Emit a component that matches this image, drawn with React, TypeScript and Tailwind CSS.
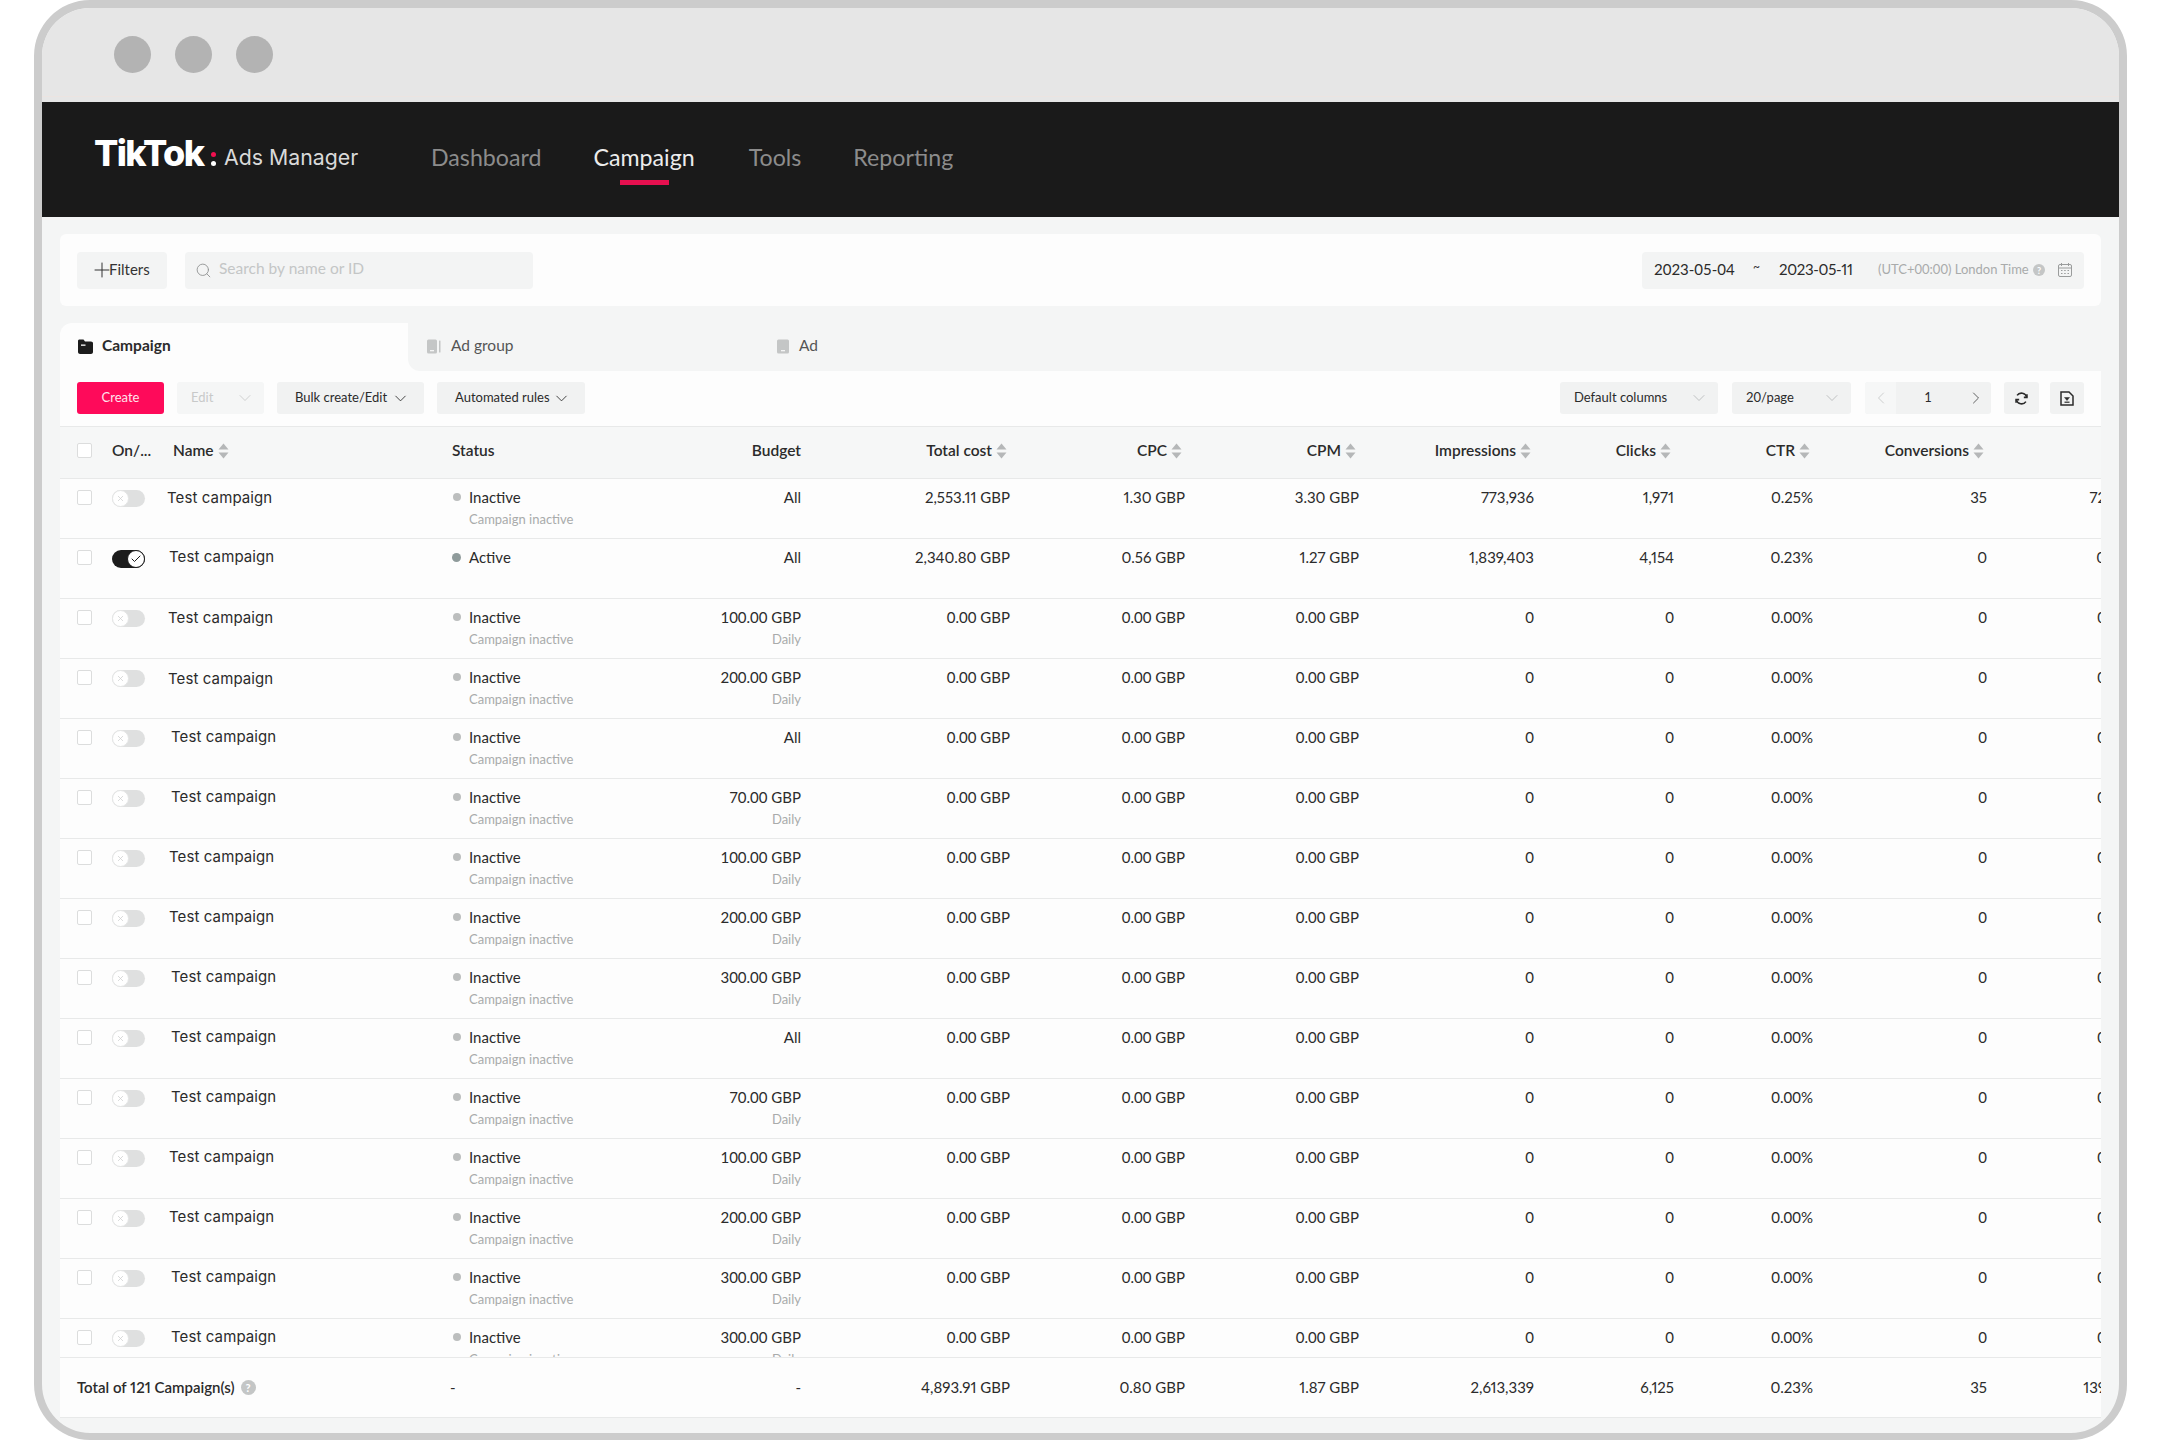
import { ChevronDown, ChevronLeft, ChevronRight, Check, Plus, Search, X } from 'lucide-react';

const sans = "font-['Lato','Liberation_Sans',sans-serif]";
const wide = "font-['Inter','Liberation_Sans',sans-serif]";

type Row = {
  budget: string;
  cost: string;
  cpc: string;
  cpm: string;
  impressions: string;
  clicks: string;
  ctr: string;
  conversions: string;
  next: string;
  nameClass: string;
  active?: boolean;
  spend?: boolean;
  clipped?: boolean;
};

const zeroRow = {
  cost: '0.00 GBP',
  cpc: '0.00 GBP',
  cpm: '0.00 GBP',
  impressions: '0',
  clicks: '0',
  ctr: '0.00%',
  conversions: '0',
  next: '0',
};

const rows: Row[] = [
  { budget: 'All', cost: '2,553.11 GBP', cpc: '1.30 GBP', cpm: '3.30 GBP', impressions: '773,936', clicks: '1,971', ctr: '0.25%', conversions: '35', next: '72', nameClass: 'pl-0 pt-[1px]', spend: true },
  { budget: 'All', cost: '2,340.80 GBP', cpc: '0.56 GBP', cpm: '1.27 GBP', impressions: '1,839,403', clicks: '4,154', ctr: '0.23%', conversions: '0', next: '0', nameClass: 'pl-[2px]', active: true, spend: true },
  { ...zeroRow, budget: '100.00 GBP', nameClass: 'pl-[1px] pt-[1px]' },
  { ...zeroRow, budget: '200.00 GBP', nameClass: 'pl-[1px] pt-[2px]' },
  { ...zeroRow, budget: 'All', nameClass: 'pl-[4px]' },
  { ...zeroRow, budget: '70.00 GBP', nameClass: 'pl-[4px]' },
  { ...zeroRow, budget: '100.00 GBP', nameClass: 'pl-[2px]' },
  { ...zeroRow, budget: '200.00 GBP', nameClass: 'pl-[2px]' },
  { ...zeroRow, budget: '300.00 GBP', nameClass: 'pl-[4px]' },
  { ...zeroRow, budget: 'All', nameClass: 'pl-[4px]' },
  { ...zeroRow, budget: '70.00 GBP', nameClass: 'pl-[4px]' },
  { ...zeroRow, budget: '100.00 GBP', nameClass: 'pl-[2px]' },
  { ...zeroRow, budget: '200.00 GBP', nameClass: 'pl-[2px]' },
  { ...zeroRow, budget: '300.00 GBP', nameClass: 'pl-[4px]' },
  { ...zeroRow, budget: '300.00 GBP', nameClass: 'pl-[4px]', clipped: true },
];

const cols = {
  check: 'w-[52px] shrink-0 pl-[17px]',
  toggle: 'w-[55px] shrink-0',
  name: 'w-[285px] shrink-0',
  status: 'w-[168px] shrink-0',
  budget: 'w-[181px] shrink-0 text-right',
  cost: 'w-[209px] shrink-0 text-right',
  cpc: 'w-[175px] shrink-0 text-right',
  cpm: 'w-[174px] shrink-0 text-right',
  impressions: 'w-[175px] shrink-0 text-right',
  clicks: 'w-[140px] shrink-0 text-right',
  ctr: 'w-[139px] shrink-0 text-right',
  conversions: 'w-[174px] shrink-0 text-right',
  next: 'w-[119px] shrink-0 text-right',
};

function SortIcon() {
  return (
    <svg viewBox="0 0 11 16" className="w-[11px] h-[16px] ml-[4px] shrink-0" fill="#b5b7b8">
      <path d="M5.5 0.5 L10.5 6.5 H0.5 Z" />
      <path d="M0.5 9.5 H10.5 L5.5 15.5 Z" />
    </svg>
  );
}

function HelpDot({ className }: { className: string }) {
  return (
    <span className={`${className} shrink-0 inline-flex items-center justify-center rounded-full bg-[#c4c6c6] text-white font-bold leading-none`}>?</span>
  );
}

function Checkbox() {
  return <div className="w-[15px] h-[15px] rounded-[2px] border border-[#dcdddd] bg-white" />;
}

function Toggle({ on }: { on?: boolean }) {
  if (on) {
    return (
      <div className="relative w-[33px] h-[18px] rounded-full bg-[#1c1c1c]">
        <div className="absolute right-0 top-0 w-[18px] h-[18px] rounded-full bg-white border border-[#1c1c1c] flex items-center justify-center">
          <Check className="w-[12px] h-[12px] text-[#1c1c1c]" strokeWidth={2} />
        </div>
      </div>
    );
  }
  return (
    <div className="relative w-[33px] h-[17px] rounded-full bg-[#dfe0e0]">
      <div className="absolute left-0 top-0 w-[17px] h-[17px] rounded-full bg-white border border-[#e4e5e5] flex items-center justify-center">
        <X className="w-[9px] h-[9px] text-[#cfd0d0]" strokeWidth={2} />
      </div>
    </div>
  );
}

function HeaderCell({ label, col }: { label: string; col: string }) {
  return (
    <div className={`${col} flex justify-end items-center pr-[3px]`}>
      <span>{label}</span>
      <SortIcon />
    </div>
  );
}

function TableRow({ row }: { row: Row }) {
  return (
    <div className={`flex items-start border-b border-[#e8e9e9] text-[15px] leading-[20px] text-[#2b2b2b] ${row.spend ? 'proportional-nums' : ''} ${row.clipped ? 'h-[39px] overflow-hidden' : 'h-[60px]'}`}>
      <div className={`${cols.check} pt-[11px]`}>
        <Checkbox />
      </div>
      <div className={`${cols.toggle} pt-[11px]`}>
        <Toggle on={row.active} />
      </div>
      <div className={`${cols.name} ${wide} text-[15px] tracking-[0.1px] pt-[8px]`}>
        <div className={row.nameClass}>Test campaign</div>
      </div>
      <div className={`${cols.status} pt-[8px]`}>
        <div className="flex items-center">
          <span className={`rounded-full mr-[8px] ${row.active ? 'w-[9px] h-[9px] bg-[#8f9b9b]' : 'w-[8px] h-[8px] bg-[#bcbebe] ml-[1px]'}`} />
          <span>{row.active ? 'Active' : 'Inactive'}</span>
        </div>
        {!row.active && <div className="pl-[17px] mt-[2px] text-[13px] text-[#a9abab]">Campaign inactive</div>}
      </div>
      <div className={`${cols.budget} pt-[8px]`}>
        <div>{row.budget}</div>
        {row.budget !== 'All' && <div className="mt-[2px] text-[13px] text-[#a9abab]">Daily</div>}
      </div>
      <div className={`${cols.cost} pt-[8px]`}>{row.cost}</div>
      <div className={`${cols.cpc} pt-[8px]`}>{row.cpc}</div>
      <div className={`${cols.cpm} pt-[8px]`}>{row.cpm}</div>
      <div className={`${cols.impressions} pt-[8px]`}>{row.impressions}</div>
      <div className={`${cols.clicks} pt-[8px]`}>{row.clicks}</div>
      <div className={`${cols.ctr} pt-[8px]`}>{row.ctr}</div>
      <div className={`${cols.conversions} pt-[8px]`}>{row.conversions}</div>
      <div className={`${cols.next} pt-[8px]`}>{row.next}</div>
    </div>
  );
}

export default function App() {
  return (
    <div className={`${sans} w-[2160px] h-[1440px] bg-white pl-[34px] pr-[33px] overflow-hidden`}>
      <div className="h-full flex flex-col overflow-hidden rounded-[56px] border-x-[8px] border-t-[8px] border-b-[7px] border-[#cccccc] bg-[#f4f5f5]">
        {/* window chrome */}
        <div className="h-[94px] shrink-0 bg-[#e6e6e6]">
          <div className="h-[89px] flex items-center gap-[24px] pl-[72px] pt-[5px] border-b border-[#ece4e1]">
            <div className="w-[37px] h-[37px] rounded-full bg-[#b3b3b3]" />
            <div className="w-[37px] h-[37px] rounded-full bg-[#b3b3b3]" />
            <div className="w-[37px] h-[37px] rounded-full bg-[#b3b3b3]" />
          </div>
        </div>

        {/* top nav */}
        <div className="h-[115px] shrink-0 flex items-center pl-[52px] pb-[4px] bg-[#1a1a1a] text-[23.2px] leading-none">
          <span className={`${wide} w-[113px] -mt-[9px] text-[36px] font-extrabold tracking-[-1.6px] text-white`}>TikTok</span>
          <span className="flex flex-col gap-[4px] ml-[4px] mt-[2px]">
            <span className="w-[5px] h-[5px] rounded-full bg-[#f0104f]" />
            <span className="w-[5px] h-[5px] rounded-full bg-white" />
          </span>
          <span className={`${wide} ml-[8px] w-[207px] text-[21.3px] text-[#d9d9d9]`}>Ads Manager</span>
          <nav className="flex gap-[52px] text-[#8c8c8c]">
            <span>Dashboard</span>
            <span className="relative text-[#ececec]">
              Campaign
              <span className="absolute left-[27px] top-[34px] w-[49px] h-[5px] bg-[#e6104f]" />
            </span>
            <span className="ml-[2px]">Tools</span>
            <span>Reporting</span>
          </nav>
        </div>

        <div className="flex-1 min-h-0 flex flex-col px-[18px] pt-[17px] pb-[15px]">
          {/* filters */}
          <div className="h-[72px] shrink-0 flex items-center justify-between px-[17px] rounded-[6px] bg-[#fdfdfd]">
            <div className="flex items-center gap-[18px]">
              <div className="w-[90px] h-[37px] rounded-[4px] bg-[#f3f4f4] flex items-center pl-[13px] pb-[2px] text-[15px] text-[#333]">
                <Plus className="w-[24px] h-[24px] -mr-[5px] mt-[2px]" strokeWidth={1} />
                Filters
              </div>
              <div className="w-[348px] h-[37px] rounded-[4px] bg-[#f3f4f4] flex items-center pl-[10px] pb-[2px] text-[15.5px] text-[#c4c6c6]">
                <Search className="w-[17px] h-[17px] text-[#8f9191] mr-[7px] mt-[2px]" strokeWidth={1.25} />
                Search by name or ID
              </div>
            </div>
            <div className="w-[442px] h-[37px] rounded-[4px] bg-[#f3f4f4] flex items-center pl-[12px] pb-[2px] text-[15px] text-[#2b2b2b] whitespace-nowrap">
              <span className="w-[81px] shrink-0">2023-05-04</span>
              <span className="w-[44px] shrink-0 pl-[18px] -mt-[4px] text-[12px]">~</span>
              <span className="w-[99px] shrink-0 proportional-nums tracking-[-0.3px]">2023-05-11</span>
              <span className="w-[155px] shrink-0 mt-[2px] text-[13px] text-[#a9abab]">(UTC+00:00) London Time</span>
              <HelpDot className="w-[12px] h-[12px] mt-[2px] text-[9px]" />
              <svg viewBox="0 0 16 16" className="ml-[12px] mt-[2px] w-[16px] h-[16px] shrink-0" fill="none" stroke="#9a9c9c" strokeWidth="1">
                <rect x="1.500" y="2.500" width="13" height="12" rx="1.500" />
                <path d="M1.500 6H14.500M4.500 1V4M11.500 1V4" />
                <path d="M4 8.500H5.500M7.200 8.500H8.700M10.500 8.500H12M4 11.500H5.500M7.200 11.500H8.700M10.500 11.500H12" />
              </svg>
            </div>
          </div>

          {/* level tabs */}
          <div className="mt-[17px] h-[48px] shrink-0 flex rounded-t-[12px] bg-[#fdfdfd] text-[15.5px]">
            <div className="w-[348px] flex items-center pl-[18px] pb-[2px] font-bold text-[#2b2b2b]">
              <svg viewBox="0 0 15 15" className="w-[15px] h-[15px] mr-[9px]" fill="#1c1c1c">
                <path d="M0 2C0 1 .7 .5 1.500 .5H5.500L7 2.500H13C14 2.500 15 3.200 15 4.300V13C15 14 14 15 13 15H2C1 15 0 14 0 13Z" />
                <rect x="3" y="5.500" width="4.500" height="1.300" fill="#fdfdfd" />
              </svg>
              Campaign
            </div>
            <div className="flex-1 flex items-center pl-[19px] pb-[2px] rounded-bl-[12px] bg-[#f4f5f5] text-[#555]">
              <svg viewBox="0 0 14 15" className="w-[14px] h-[15px] mr-[10px]" fill="#c4c6c6">
                <rect x="0" y="0.500" width="10" height="14" rx="1.500" />
                <rect x="12" y="1.500" width="1.500" height="12" rx="0.500" />
                <rect x="3" y="11" width="4" height="1.300" fill="#f4f5f5" />
              </svg>
              <span className="w-[326px]">Ad group</span>
              <svg viewBox="0 0 12 15" className="w-[12px] h-[15px] mr-[10px]" fill="#c4c6c6">
                <rect x="0" y="0.500" width="12" height="14" rx="1.500" />
                <rect x="4" y="11" width="4" height="1.300" fill="#f4f5f5" />
              </svg>
              <span>Ad</span>
            </div>
          </div>

          {/* table card */}
          <div className="flex-1 min-h-0 flex flex-col overflow-hidden bg-[#fdfdfd] text-[#2b2b2b]">
            <div className="h-[55px] shrink-0 flex items-center justify-between px-[17px] pb-[1px] text-[13px]">
              <div className="flex items-center">
                <div className="w-[87px] h-[32px] rounded-[3px] bg-[#fe0a5a] flex items-center justify-center text-[#ffe4ec]">Create</div>
                <div className="ml-[13px] w-[87px] h-[32px] rounded-[3px] bg-[#f5f6f6] flex items-center justify-between pl-[14px] pr-[9px] text-[#c8c9c9]">
                  Edit
                  <ChevronDown className="w-[20px] h-[20px]" strokeWidth={1} />
                </div>
                <div className="ml-[13px] w-[147px] h-[32px] rounded-[3px] bg-[#f1f2f2] flex items-center justify-between pl-[18px] pr-[14px]">
                  Bulk create/Edit
                  <ChevronDown className="w-[19px] h-[19px]" strokeWidth={1.1} />
                </div>
                <div className="ml-[13px] w-[148px] h-[32px] rounded-[3px] bg-[#f1f2f2] flex items-center justify-between pl-[18px] pr-[14px]">
                  Automated rules
                  <ChevronDown className="w-[19px] h-[19px]" strokeWidth={1.1} />
                </div>
              </div>
              <div className="flex items-center">
                <div className="w-[158px] h-[32px] rounded-[3px] bg-[#f1f2f2] flex items-center justify-between pl-[14px] pr-[9px]">
                  Default columns
                  <ChevronDown className="w-[20px] h-[20px] text-[#b5b7b8]" strokeWidth={1} />
                </div>
                <div className="ml-[14px] w-[119px] h-[32px] rounded-[3px] bg-[#f1f2f2] flex items-center justify-between pl-[14px] pr-[9px]">
                  20/page
                  <ChevronDown className="w-[20px] h-[20px] text-[#b5b7b8]" strokeWidth={1} />
                </div>
                <div className="ml-[14px] w-[126px] h-[32px] flex items-stretch rounded-[3px] overflow-hidden bg-[#f1f2f2]">
                  <div className="w-[31px] bg-[#f6f7f7] flex items-center justify-center">
                    <ChevronLeft className="w-[20px] h-[20px] text-[#c4c6c6]" strokeWidth={1} />
                  </div>
                  <div className="flex-1 flex items-center justify-center">1</div>
                  <div className="w-[31px] flex items-center justify-center">
                    <ChevronRight className="w-[20px] h-[20px] text-[#444]" strokeWidth={1} />
                  </div>
                </div>
                <div className="ml-[13px] w-[35px] h-[32px] rounded-[3px] bg-[#f1f2f2] flex items-center justify-center">
                  <svg viewBox="0 0 16 16" className="w-[15px] h-[15px]" fill="none" stroke="#2b2b2b" strokeWidth="1.700">
                    <path d="M13.500 6.500A5.700 5.700 0 0 0 3.300 4.700" />
                    <path d="M2.500 9.500A5.700 5.700 0 0 0 12.700 11.300" />
                    <path d="M13.800 3.500V6.800H10.500" />
                    <path d="M2.200 12.500V9.200H5.500" />
                  </svg>
                </div>
                <div className="ml-[11px] w-[34px] h-[32px] rounded-[3px] bg-[#f1f2f2] flex items-center justify-center">
                  <svg viewBox="0 0 14 15" className="w-[14px] h-[15px]" fill="none" stroke="#2b2b2b" strokeWidth="1.500">
                    <path d="M1 1H9L13 5V14H1Z" />
                    <path d="M4.500 6.500H9.500L7 9.500Z" fill="#2b2b2b" strokeWidth="0.500" />
                    <path d="M4.500 11.200H9.500" strokeWidth="1.200" />
                  </svg>
                </div>
              </div>
            </div>

            {/* column heads */}
            <div className="h-[53px] shrink-0 flex items-center pb-[4px] border-y border-[#e8e9e9] bg-[#f6f7f7] text-[15.5px] font-semibold text-[#2b2b2b]">
              <div className={cols.check}>
                <Checkbox />
              </div>
              <div className={cols.toggle}>On/...</div>
              <div className={`${cols.name} flex items-center pl-[6px]`}>
                Name
                <SortIcon />
              </div>
              <div className={cols.status}>Status</div>
              <div className={cols.budget}>Budget</div>
              <HeaderCell label="Total cost" col={cols.cost} />
              <HeaderCell label="CPC" col={cols.cpc} />
              <HeaderCell label="CPM" col={cols.cpm} />
              <HeaderCell label="Impressions" col={cols.impressions} />
              <HeaderCell label="Clicks" col={cols.clicks} />
              <HeaderCell label="CTR" col={cols.ctr} />
              <HeaderCell label="Conversions" col={cols.conversions} />
              <div className={cols.next} />
            </div>

            {rows.map((row, i) => (
              <TableRow key={i} row={row} />
            ))}

            {/* totals */}
            <div className="h-[60px] shrink-0 flex items-center border-b border-[#e8e9e9] text-[15px] proportional-nums">
              <div className="w-[392px] shrink-0 pl-[17px] flex items-center font-semibold">
                Total of 121 Campaign(s)
                <HelpDot className="ml-[6px] w-[15px] h-[15px] text-[11px]" />
              </div>
              <div className={`${cols.status} -ml-[2px] mr-[2px]`}>-</div>
              <div className={cols.budget}>-</div>
              <div className={cols.cost}>4,893.91 GBP</div>
              <div className={cols.cpc}>0.80 GBP</div>
              <div className={cols.cpm}>1.87 GBP</div>
              <div className={cols.impressions}>2,613,339</div>
              <div className={cols.clicks}>6,125</div>
              <div className={cols.ctr}>0.23%</div>
              <div className={cols.conversions}>35</div>
              <div className={cols.next}>139</div>
            </div>
          </div>
        </div>
      </div>
    </div>
  );
}
